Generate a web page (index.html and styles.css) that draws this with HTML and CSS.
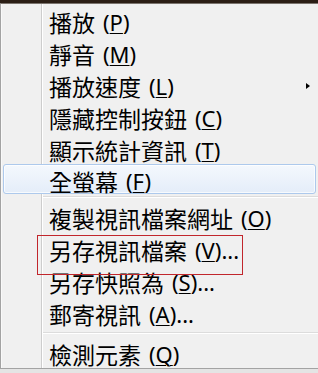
FILE: index.html
```html
<!DOCTYPE html>
<html lang="zh-Hant">
<head>
    <meta charset="UTF-8">
    <meta name="viewport" content="width=device-width, initial-scale=1.0">
    <title>視訊選單</title>
    <link rel="stylesheet" href="styles.css">
</head>
<body>
    <div class="video-edge"></div>

    <div class="menu">
        <div class="item"><span class="label">播放</span><span class="key">(<u>P</u>)</span></div>
        <div class="item"><span class="label">靜音</span><span class="key">(<u>M</u>)</span></div>
        <div class="item"><span class="label">播放速度</span><span class="key">(<u>L</u>)</span><span class="arrow"></span></div>
        <div class="item"><span class="label">隱藏控制按鈕</span><span class="key">(<u>C</u>)</span></div>
        <div class="item"><span class="label">顯示統計資訊</span><span class="key">(<u>T</u>)</span></div>
        <div class="item hot"><span class="label">全螢幕</span><span class="key">(<u>F</u>)</span></div>

        <div class="sep"></div>

        <div class="item"><span class="label">複製視訊檔案網址</span><span class="key">(<u>O</u>)</span></div>
        <div class="item"><span class="label">另存視訊檔案</span><span class="key">(<u>V</u>)...</span></div>
        <div class="item"><span class="label">另存快照為</span><span class="key">(<u>S</u>)...</span></div>
        <div class="item"><span class="label">郵寄視訊</span><span class="key">(<u>A</u>)...</span></div>

        <div class="sep sep-low"></div>

        <div class="item"><span class="label">檢測元素</span><span class="key">(<u>Q</u>)</span></div>

        <!-- red annotation drawn over "另存視訊檔案" -->
        <div class="callout"></div>
    </div>
</body>
</html>
```

FILE: styles.css
```css
* {
    margin: 0;
    padding: 0;
    box-sizing: border-box;
}

body {
    width: 318px;
    height: 373px;
    overflow: hidden;
    background: #e4e4e4;
    font-family: "Noto Sans CJK TC", "Noto Sans", sans-serif;
    color: #000;
}

.video-edge {
    height: 3px;
    background: #2b1e15;
}

.menu {
    position: relative;
    background-color: #f0f0f0;
    background-image: linear-gradient(to right,
        transparent 40px, #cdcdcd 40px, #cdcdcd 41px,
        #ffffff 41px, #ffffff 42px, transparent 42px);
    border-top: 1px solid #7a736d;
    border-left: 1px solid #a3a3a3;
    border-bottom: 1px solid #a3a3a3;
    box-shadow: inset 1px 0 #f9f9f9;
}

.item {
    display: flex;
    align-items: center;
    height: 32px;
    padding-left: 48px;
    padding-top: 4px;
    font-size: 23px;
    line-height: 1;
    white-space: nowrap;
}

.key {
    margin-left: 8px;
    font-size: 22px;
    font-family: "Noto Sans", "Noto Sans CJK TC", sans-serif;
}

.key u {
    text-underline-offset: 2px;
    text-decoration-thickness: 1px;
}

.arrow {
    margin-left: auto;
    margin-right: 8px;
    width: 0;
    height: 0;
    border-top: 3.5px solid transparent;
    border-bottom: 3.5px solid transparent;
    border-left: 4px solid #000;
}

.item.hot {
    height: 30px;
    margin: 0 2px 2px 2px;
    padding-left: 45px;
    border: 1px solid #adc9ec;
    border-radius: 3px;
    background: linear-gradient(#f4f8fd, #e4edf9);
    box-shadow: inset 0 0 0 1px rgba(255, 255, 255, 0.7);
}

.sep {
    height: 2px;
    margin: 1px 0 2px 42px;
    border-top: 1px solid #dcdcdc;
    border-bottom: 1px solid #ffffff;
}

.sep-low {
    margin: 4px 0 2px 42px;
}

.callout {
    position: absolute;
    left: 36px;
    top: 231px;
    width: 206px;
    height: 40px;
    border: 1px solid #c1262c;
}
```
